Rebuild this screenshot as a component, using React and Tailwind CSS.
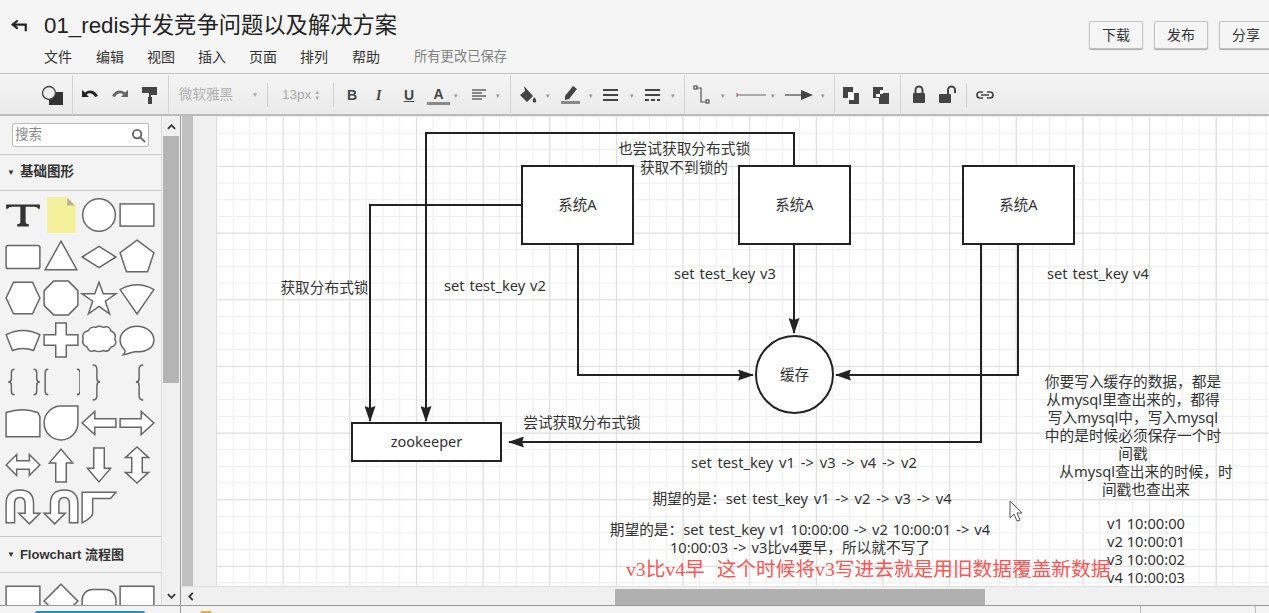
import React from 'react';

const CJK = '"Noto Sans","Noto Sans CJK SC",sans-serif';
const UI = '"Liberation Sans","Noto Sans CJK SC",sans-serif';

function Shape({ children }) {
  return (
    <svg viewBox="0 0 36 36" className="w-[38px] h-[38px]" fill="#fff" stroke="#666" strokeWidth="1.4">
      {children}
    </svg>
  );
}

const shapes = [
  <svg viewBox="0 0 36 36" className="w-[38px] h-[38px]"><path d="M2 8h32v4h-1.500q-1-1.800-4-1.800h-8v14.500q0 2 3 2v2.300H12.500v-2.300q3 0 3-2V10.200h-8q-3 0-4 1.800H2z" fill="#333" /></svg>,
  <svg viewBox="0 0 36 36" className="w-[38px] h-[38px]"><path d="M5 1h19l8 8v26H5z" fill="#f5f09b" /><path d="M24 2l7 7h-7z" fill="#b5b08a" /></svg>,
  <Shape><circle cx="18" cy="18" r="15.500" /></Shape>,
  <Shape><rect x="2" y="7.500" width="32" height="21" /></Shape>,
  <Shape><rect x="2" y="7" width="32" height="22" rx="2" /></Shape>,
  <Shape><path d="M18 3l15 27H3z" /></Shape>,
  <Shape><path d="M18 8l16 10-16 10L2 18z" /></Shape>,
  <Shape><path d="M18 2l16 12-6 18H8L2 14z" /></Shape>,
  <Shape><path d="M9 3h18l7 15-7 15H9L2 18z" /></Shape>,
  <Shape><path d="M11 2h14l9 9v14l-9 9H11l-9-9V11z" /></Shape>,
  <Shape><path d="M18 3l4 11h12l-10 7 4 12-10-7-10 7 4-12-10-7h12z" /></Shape>,
  <Shape><path d="M2 10q16-9 32 0L18 33z" /></Shape>,
  <Shape><path d="M2 13q16-8 32 0l-6 15q-10-4-20 0z" /></Shape>,
  <Shape><path d="M13 2h10v11h11v10H23v11H13V23H2V13h11z" /></Shape>,
  <Shape><path d="M8 9q2-4 7-3 3-2 7 0 6-2 7 3 6 3 4 8 3 6-4 8-2 5-7 3-4 2-8 0-6 2-7-3-6-3-4-8-2-6 5-8z" /></Shape>,
  <Shape><path d="M18 5c9 0 16 6 16 13s-7 12-16 11c-4 0-8 2-13 3 2-2 2-4 1-5-3-3-4-5-4-9C2 11 9 5 18 5z" /></Shape>,
  <Shape><path d="M10 6q-3 0-3 3v6q0 3-3 3 3 0 3 3v6q0 3 3 3M28 6q3 0 3 3v6q0 3 3 3-3 0-3 3v6q0 3-3 3" fill="none" /></Shape>,
  <Shape><path d="M6 6q-3 0-3 3v18q0 3 3 3M33 6q3 0 3 3v18q0 3-3 3" fill="none" /></Shape>,
  <Shape><path d="M12 2q4 0 4 4v9q0 3 3 3-3 0-3 3v10q0 4-4 4" fill="none" /></Shape>,
  <Shape><path d="M24 2q-4 0-4 4v9q0 3-3 3 3 0 3 3v10q0 4 4 4" fill="none" /></Shape>,
  <Shape><path d="M2 8q16-5 30 0l2 4v19H2z" /></Shape>,
  <Shape><path d="M34 2v16a16 16 0 1 1-16-16z" /></Shape>,
  <Shape><path d="M2 18L14 7v7h20v8H14v7z" /></Shape>,
  <Shape><path d="M34 18L22 7v7H2v8h20v7z" /></Shape>,
  <Shape><path d="M2 18l10-10v6h12V8l10 10-10 10v-6H12v6z" /></Shape>,
  <Shape><path d="M18 3l11 13h-6v18H13V16H7z" /></Shape>,
  <Shape><path d="M18 34l11-13h-6V2H13v19H7z" /></Shape>,
  <Shape><path d="M18 1l11 10h-6v14h6L18 35 7 25h6V11H7z" /></Shape>,
  <Shape><path d="M2 33V15q0-13 13-13t13 13v9h6L24 34 14 24h6v-9q0-6-5-6t-5 6v18z" /></Shape>,
  <Shape><path d="M34 33V15q0-13-13-13T8 15v9H2l10 10 10-10h-6v-9q0-6 5-6t5 6v18z" /></Shape>,
  <Shape><path d="M2 33V4h32l-5 6H12v14q0 4-10 9z" /></Shape>,
];

const flow = [
  <Shape><rect x="2" y="5" width="32" height="30" /></Shape>,
  <Shape><path d="M18 3l16 16-16 16L2 19z" /></Shape>,
  <Shape><rect x="2" y="8" width="32" height="24" rx="10" /></Shape>,
  <Shape><path d="M2 5h32v26q-8-14-16 0t-16 2z" /></Shape>,
];

function TbIcon({ children, w = 20 }) {
  return (
    <svg viewBox={`0 0 ${w} 20`} style={{ width: w, height: 20 }} className="shrink-0" fill="#444">
      {children}
    </svg>
  );
}
const Caret = () => <span className="ml-[3px] w-[4px] text-[7px] text-[#999] leading-none shrink-0">▾</span>;
const Sep = () => <div className="w-px h-[40px] bg-[#d4d4d4] shrink-0" />;
const ShortSep = () => <div className="w-px h-[24px] bg-[#d0d0d0] shrink-0" />;

function Node({ x, y, w, h, children, className = '' }) {
  return (
    <div
      className={`absolute border-2 border-[#222] bg-white flex items-center justify-center text-[14.500px] text-[#333] ${className}`}
      style={{ left: x, top: y, width: w, height: h }}
    >
      {children}
    </div>
  );
}
function Lbl({ x, y, w, children, className = '' }) {
  return (
    <div
      className={`absolute text-center text-[14.700px] leading-[18px] text-[#333] whitespace-nowrap ${className}`}
      style={{ left: x, top: y, width: w }}
    >
      {children}
    </div>
  );
}

export default function App() {
  return (
    <div className="w-[1269px] h-[613px] overflow-hidden flex flex-col bg-[#f4f4f4] text-[#333]" style={{ fontFamily: UI }}>
      {/* header */}
      <div className="h-[74px] shrink-0 flex border-b border-[#c4c4c4] bg-[#f5f5f5]">
        <div className="w-[44px] pl-[10px] pt-[16px] shrink-0">
          <svg viewBox="0 0 20 20" className="w-[18px] h-[18px]" fill="none" stroke="#222" strokeWidth="2.400">
            <path d="M17.500 17V9.500H4" />
            <path d="M8.500 5L3 9.500l5.500 4.500" />
          </svg>
        </div>
        <div className="flex-1 min-w-0 flex flex-col">
          <div className="text-[22.300px] leading-[26px] pt-[13px] text-[#222]">01_redis并发竞争问题以及解决方案</div>
          <div className="flex items-center mt-[9px] text-[14px] leading-[18px] text-[#333]">
            <span className="w-[52px]">文件</span>
            <span className="w-[51px]">编辑</span>
            <span className="w-[51px]">视图</span>
            <span className="w-[51px]">插入</span>
            <span className="w-[51px]">页面</span>
            <span className="w-[52px]">排列</span>
            <span className="w-[62px]">帮助</span>
            <span className="text-[13.300px] text-[#808080]">所有更改已保存</span>
          </div>
        </div>
        <div className="flex gap-[11px] pt-[21px] -mr-[4px]">
          {['下载', '发布', '分享'].map((t) => (
            <div key={t} className="w-[54px] h-[28px] border border-[#c2c2c2] rounded-[2px] bg-[#f5f5f5] shadow-[0_1px_1px_#aaa] flex items-center justify-center text-[14px] text-[#333]">{t}</div>
          ))}
        </div>
      </div>
      {/* toolbar */}
      <div className="h-[42px] shrink-0 flex items-center pt-[2px] border-b-2 border-[#bbb] bg-[linear-gradient(#f4f4f4,#ebebeb)] text-[#999]">
        <div className="w-[72px] flex justify-end pr-[8px] shrink-0">
          <TbIcon w={24}>
            <rect x="9" y="7" width="14" height="13" fill="#333" />
            <circle cx="9" cy="8" r="6.500" fill="#efefef" stroke="#444" strokeWidth="1.400" />
          </TbIcon>
        </div>
        <Sep />
        <div className="flex items-center gap-[10px] pl-[7px] w-[95px] shrink-0">
          <TbIcon>
            <path d="M2 5v7h7L6.500 9.500C9 7.500 13 8 15 12l3-1C15 5 9 4 5 7.500z" fill="#222" />
          </TbIcon>
          <TbIcon>
            <path d="M18 5v7h-7l2.500-2.500C11 7.500 7 8 5 12l-3-1C5 5 11 4 15 7.500z" fill="#666" />
          </TbIcon>
          <TbIcon>
            <path d="M2 2h15v6H2z M9 8h8v2H11v2H9z M8 12h4v7H8z" fill="#444" />
          </TbIcon>
        </div>
        <Sep />
        <div className="w-[98px] pl-[10px] flex items-center justify-between pr-[10px] text-[13.500px] text-[#b0b0b0] shrink-0">
          <span>微软雅黑</span><span className="text-[8px]">▾</span>
        </div>
        <ShortSep />
        <div className="w-[65px] pl-[14px] flex items-center text-[13.500px] text-[#aaa] shrink-0">
          13px<span className="ml-[3px] flex flex-col text-[6px] leading-[6px]"><span>▲</span><span>▼</span></span>
        </div>
        <ShortSep />
        <div className="flex items-center text-[14px] text-[#444] shrink-0 pl-[13px] w-[176px]">
          <span className="w-[29px] font-bold">B</span>
          <span className="w-[28px] font-bold italic" style={{ fontFamily: '"Liberation Serif",serif' }}>I</span>
          <span className="w-[23px] font-bold underline">U</span>
          <span className="w-[23px] text-center font-bold border-b-[3px] border-[#888] leading-[16px]">A</span>
          <span className="w-[1px]" />
          <Caret />
          <svg viewBox="0 0 16 14" className="w-[16px] h-[14px] ml-[13px]" stroke="#666" strokeWidth="1.300">
            <path d="M1 2h14M1 5h10M1 8h14M1 11h10" />
          </svg>
          <span className="w-[6px]" />
          <Caret />
        </div>
        <Sep />
        <div className="flex items-center shrink-0 pl-[7px] w-[173px]">
          <TbIcon>
            <path d="M6 1l9 10-6 6-7-7 5-4zM16 12q3 3 2 5-2 1-3 0-1-2 1-5z" fill="#444" />
          </TbIcon>
          <span className="w-[5px]" />
          <Caret />
          <span className="w-[10px]" />
          <TbIcon>
            <path d="M13 1l4 3-8 10-4 1 0-4z" fill="#444" />
            <rect x="1" y="16" width="19" height="3" fill="#888" />
          </TbIcon>
          <span className="w-[6px]" />
          <Caret />
          <span className="w-[9px]" />
          <TbIcon w={16}>
            <path d="M1 4h15v2H1zM1 9h15v2H1zM1 14h15v2H1z" fill="#444" />
          </TbIcon>
          <span className="w-[9px]" />
          <Caret />
          <span className="w-[10px]" />
          <TbIcon w={16}>
            <path d="M1 4h15v2H1zM1 9h15v2H1zM1 14h4v2H1zM7 14h4v2H7zM13 14h3v2h-3z" fill="#444" />
          </TbIcon>
          <span className="w-[8px]" />
          <Caret />
        </div>
        <Sep />
        <div className="flex items-center shrink-0 pl-[8px] w-[149px]">
          <svg viewBox="0 0 20 20" className="w-[20px] h-[20px] shrink-0" fill="none" stroke="#555" strokeWidth="1.200">
            <path d="M3 3h5v14h5" /><rect x="1" y="1" width="3" height="3" /><rect x="13" y="15" width="3" height="3" />
          </svg>
          <span className="w-[5px]" />
          <Caret />
          <span className="w-[11px]" />
          <svg viewBox="0 0 30 8" className="w-[30px] h-[8px] shrink-0"><path d="M1 4h29" stroke="#666" /><path d="M1 2v4" stroke="#c44" /></svg>
          <span className="w-[2px]" />
          <Caret />
          <span className="w-[10px]" />
          <svg viewBox="0 0 28 10" className="w-[28px] h-[10px] shrink-0"><path d="M0 5h18" stroke="#444" strokeWidth="1.200" /><path d="M16 0l12 5-12 5z" fill="#444" /></svg>
          <span className="w-[5px]" />
          <Caret />
        </div>
        <Sep />
        <div className="flex items-center shrink-0 pl-[6px] gap-[10px] w-[65px]">
          <TbIcon>
            <rect x="2" y="2" width="10" height="11" fill="#444" /><rect x="8" y="8" width="10" height="11" fill="#444" /><rect x="7" y="7" width="6" height="8" fill="#fff" />
          </TbIcon>
          <TbIcon>
            <rect x="8" y="8" width="10" height="11" fill="#444" /><rect x="2" y="2" width="10" height="11" fill="#444" /><rect x="9" y="5" width="3" height="4" fill="#fff" /><rect x="5" y="9" width="4" height="3" fill="#fff" />
          </TbIcon>
        </div>
        <Sep />
        <div className="flex items-center shrink-0 pl-[9px]">
          <TbIcon>
            <rect x="3" y="8" width="12" height="10" rx="1" fill="#444" /><path d="M5.500 9V5a3.500 3.500 0 0 1 7 0v4" fill="none" stroke="#444" strokeWidth="2" />
          </TbIcon>
          <span className="w-[8px]" />
          <TbIcon>
            <rect x="1" y="9" width="12" height="9" rx="1" fill="#444" /><path d="M10 9V5a3.500 3.500 0 0 1 7 0v3" fill="none" stroke="#444" strokeWidth="2" />
          </TbIcon>
          <span className="w-[8px]" />
          <ShortSep />
          <span className="w-[8px]" />
          <svg viewBox="0 0 20 10" className="w-[20px] h-[10px] shrink-0" fill="none" stroke="#444" strokeWidth="1.700">
            <path d="M8 2H5a3 3 0 0 0 0 6h3M12 2h3a3 3 0 0 1 0 6h-3M6 5h8" />
          </svg>
        </div>
      </div>
      {/* body */}
      <div className="flex-1 min-h-0 flex">
        {/* sidebar */}
        <div className="w-[181px] shrink-0 flex border-r border-[#999]">
          <div className="w-[162px] shrink-0 overflow-hidden bg-[#f3f3f3] border-r border-[#ddd]">
            <div className="h-[39px] border-b border-[#c8c8c8] px-[12px] pt-[7px]">
              <div className="h-[24px] bg-white border border-[#bbb] rounded-[2px] flex items-center justify-between px-[2px] text-[13.500px] text-[#888]">
                <span>搜索</span>
                <svg viewBox="0 0 16 16" className="w-[15px] h-[15px]" fill="none" stroke="#666" strokeWidth="2"><circle cx="6.500" cy="6.500" r="4.500" /><path d="M10 10l5 5" /></svg>
              </div>
            </div>
            <div className="h-[36px] border-b border-[#c8c8c8] flex items-center pl-[7px] gap-[5px] text-[13.500px] font-bold text-[#333]">
              <span className="text-[8px]">▼</span><span>基础图形</span>
            </div>
            <div className="grid grid-cols-[repeat(4,38px)] gap-y-[3.700px] pl-[4px] pt-[5px] h-[345px] content-start">
              {shapes.map((s, i) => <div key={i} className="w-[38px] h-[38px] flex items-center justify-center">{s}</div>)}
            </div>
            <div className="h-[37px] border-y border-[#c8c8c8] flex items-center pl-[7px] gap-[5px] text-[13px] font-bold text-[#333]">
              <span className="text-[8px]">▼</span><span>Flowchart 流程图</span>
            </div>
            <div className="grid grid-cols-[repeat(4,38px)] pl-[4px] pt-[8px]">
              {flow.map((s, i) => <div key={i} className="w-[38px] h-[38px]">{s}</div>)}
            </div>
          </div>
          <div className="w-[18px] shrink-0 bg-[#f0f0f0] flex flex-col items-center">
            <svg viewBox="0 0 10 6" className="w-[9px] h-[6px] mt-[8px] shrink-0" fill="none" stroke="#333" strokeWidth="2"><path d="M1 5l4-4 4 4" /></svg>
            <div className="w-[16px] h-[247px] mt-[6px] bg-[#b4b4b4]" />
            <div className="flex-1" />
            <svg viewBox="0 0 10 6" className="w-[9px] h-[6px] mb-[6px] shrink-0" fill="none" stroke="#333" strokeWidth="2"><path d="M1 1l4 4 4-4" /></svg>
          </div>
        </div>
        {/* canvas area */}
        <div className="flex-1 min-w-0 flex flex-col">
          <div className="flex-1 min-h-0 flex">
            <div className="w-[11px] shrink-0 bg-[#c0c0c0] ml-[1px]" />
            <div className="w-[23px] shrink-0 bg-[#f0f0f0]" />
            <div className="flex-1 relative overflow-hidden bg-white bg-[linear-gradient(#dedede_1px,transparent_1px),linear-gradient(90deg,#dedede_1px,transparent_1px),linear-gradient(#eeeeee_1px,transparent_1px),linear-gradient(90deg,#eeeeee_1px,transparent_1px)] bg-[size:66.670px_66.670px,66.670px_66.670px,16.670px_16.670px,16.670px_16.670px] bg-[position:0_50px,0_0,0_0,0_0]" style={{ fontFamily: CJK }}>
              <div className="absolute left-0 -top-px w-full h-[480px]">
                <svg className="absolute left-0 top-0 w-[1053px] h-[471px]" viewBox="216 115 1053 471" fill="none" stroke="#222" strokeWidth="2">
                  <defs>
                    <marker id="a" markerWidth="17" markerHeight="11" refX="15" refY="5.500" orient="auto" markerUnits="userSpaceOnUse">
                      <path d="M0 0L16 5.500L0 11L2 5.500z" fill="#222" stroke="none" />
                    </marker>
                  </defs>
                  <path d="M521 205H370V421" markerEnd="url(#a)" />
                  <path d="M794 166V133H426V421" markerEnd="url(#a)" />
                  <path d="M794 244V333" markerEnd="url(#a)" />
                  <path d="M578 244V375H753" markerEnd="url(#a)" />
                  <path d="M1018 244V375H836" markerEnd="url(#a)" />
                  <path d="M981 244V442H509" markerEnd="url(#a)" />
                </svg>
                <Node x={305} y={50} w={113} h={80}>系统A</Node>
                <Node x={522} y={50} w={113} h={80}>系统A</Node>
                <Node x={746} y={50} w={113} h={80}>系统A</Node>
                <Node x={539} y={220} w={79} h={79} className="rounded-full">缓存</Node>
                <Node x={135} y={307} w={151} h={40}>zookeeper</Node>
                <Lbl x={358} y={24} w={220} className="leading-[19px]">也尝试获取分布式锁<br />获取不到锁的</Lbl>
                <Lbl x={41} y={163} w={135}>获取分布式锁</Lbl>
                <Lbl x={209} y={161} w={140} className="[word-spacing:1px]">set test_key v2</Lbl>
                <Lbl x={439} y={149} w={140} className="[word-spacing:1px]">set test_key v3</Lbl>
                <Lbl x={812} y={149} w={140} className="[word-spacing:1px]">set test_key v4</Lbl>
                <Lbl x={291} y={298} w={150}>尝试获取分布式锁</Lbl>
                <Lbl x={438} y={338} w={300} className="[word-spacing:2px]">set test_key v1 -&gt; v3 -&gt; v4 -&gt; v2</Lbl>
                <Lbl x={426} y={374} w={320} className="[word-spacing:2px]">期望的是：set test_key v1 -&gt; v2 -&gt; v3 -&gt; v4</Lbl>
                <Lbl x={379} y={405} w={410} className="[word-spacing:1.200px]">期望的是：set test_key v1 10:00:00 -&gt; v2 10:00:01 -&gt; v4<br />10:00:03 -&gt; v3比v4要早，所以就不写了</Lbl>
                <Lbl x={827} y={257} w={180}>你要写入缓存的数据，都是<br />从mysql里查出来的，都得<br />写入mysql中，写入mysql<br />中的是时候必须保存一个时<br />间戳</Lbl>
                <Lbl x={840} y={347} w={180}>从mysql查出来的时候，时<br />间戳也查出来</Lbl>
                <Lbl x={840} y={399} w={180}>v1 10:00:00<br />v2 10:00:01<br />v3 10:00:02<br />v4 10:00:03</Lbl>
                <div className="absolute left-[410px] top-[442px] text-[19.700px] leading-[24px] text-[#f55] whitespace-nowrap [word-spacing:7px]" style={{ fontFamily: '"Liberation Serif","Noto Sans CJK SC",serif' }}>v3比v4早 这个时候将v3写进去就是用旧数据覆盖新数据</div>
                <svg viewBox="0 0 14 22" className="absolute left-[793px] top-[385px] w-[14px] h-[22px]" fill="#fff" stroke="#555" strokeWidth="1"><path d="M1 1v17l4-4 3 7 3-1-3-7h5z" /></svg>
              </div>
            </div>
          </div>
          <div className="h-[19px] shrink-0 bg-[#f0f0f0] flex items-center border-t border-[#ddd]">
            <svg viewBox="0 0 6 10" className="w-[6px] h-[9px] ml-[7px] shrink-0" fill="none" stroke="#333" strokeWidth="2"><path d="M5 1L1 5l4 4" /></svg>
            <div className="w-[370px] h-[16px] mt-[1px] ml-[421px] bg-[#b0b0b0]" />
          </div>
        </div>
      </div>
      {/* status */}
      <div className="h-[8px] shrink-0 border-t border-[#999] bg-[#f3f3f3] flex items-end">
        <div className="w-[110px] h-[2px] ml-[35px] bg-[#1f8fd6] rounded-t-[2px]" />
        <div className="w-px h-full ml-[35px] bg-[#999]" />
        <div className="w-[12px] h-[2px] ml-[19px] bg-[#f0b040] rounded-t-[6px]" />
        <div className="w-px h-full ml-[928px] bg-[#bbb]" />
        <div className="w-px h-full ml-[114px] bg-[#bbb]" />
      </div>
    </div>
  );
}
